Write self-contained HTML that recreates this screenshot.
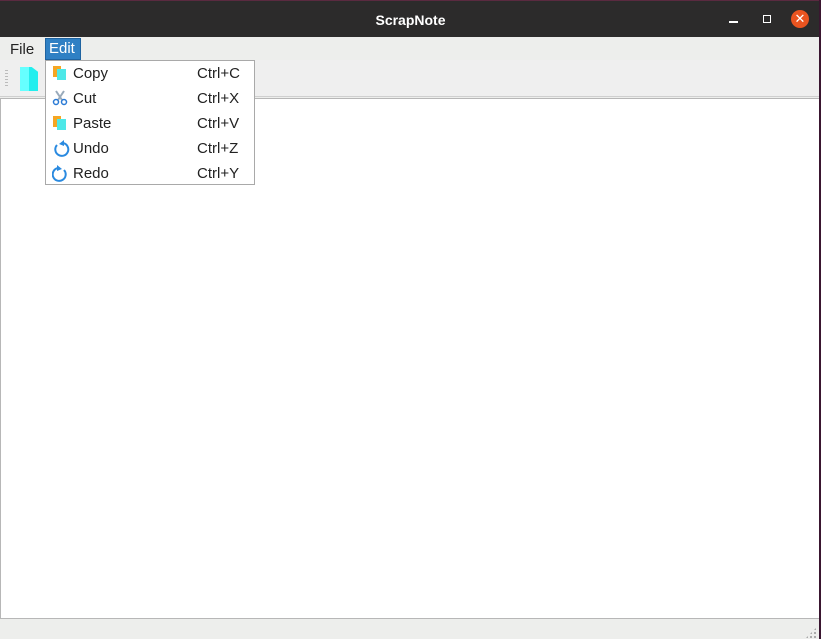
<!DOCTYPE html>
<html><head><style>
body{margin:0;width:821px;height:639px;overflow:hidden;background:#edeeec;font-family:"Liberation Sans","DejaVu Sans",sans-serif;position:relative}
.abs{position:absolute}
#tb{left:0;top:0;width:821px;height:37px;background:#2c2b2b;border-top:1px solid #5a2a40;box-sizing:border-box}
#title{left:0;width:821px;top:11px;text-align:center;color:#fff;font-weight:bold;font-size:14px}
#mb{left:0;top:37px;width:821px;height:23px;background:#edeeec;font-size:15px;color:#222}
.mi{position:absolute;top:3px;height:19px;line-height:19px;padding:0 4px}
#tool{left:0;top:60px;width:821px;height:36px;background:#efefef;border-bottom:1px solid #cfcfcf}
#text{left:0;top:98px;width:818px;height:519px;background:#fff;border:1px solid #b7b7b7}
#rb{left:819px;top:0;width:2px;height:639px;background:#3a1630}
#menu{left:45px;top:60px;width:208px;height:123px;background:#fff;border:1px solid #a9a9a9;font-size:15px;color:#222}
.it{position:absolute;left:0;width:208px;height:25px;line-height:25px}
.it .l{position:absolute;left:27px}
.it .r{position:absolute;left:151px}
.it svg{position:absolute;left:6px;top:4px}
</style></head><body>
<div id="tb" class="abs"><div id="title" class="abs">ScrapNote</div>
<div class="abs" style="left:729px;top:20px;width:9px;height:1.5px;background:#fff"></div>
<div class="abs" style="left:763px;top:14px;width:6px;height:6px;border:1.5px solid #fff"></div>
<div class="abs" style="left:791px;top:9px;width:18px;height:18px;border-radius:50%;background:#e95420;color:#fff;font-size:13px;line-height:18px;text-align:center">✕</div>
</div>
<div id="mb" class="abs"><div class="mi" style="left:6px">File</div><div class="mi" style="left:45px;background:#2f80c4;color:#fff;border:1px solid #1f63a0;top:1px;height:20px;width:28px;padding:0 3px">Edit</div></div>
<div id="tool" class="abs">
<div class="abs" style="left:5px;top:10px;width:3px;height:18px;background:repeating-linear-gradient(#bbb 0 1px,transparent 1px 3px)"></div>
<div class="abs" style="left:20px;top:7px;width:18px;height:24px;background:linear-gradient(90deg,#6ff 0 50%,#2ee 50%);clip-path:polygon(0 0,65% 0,100% 20%,100% 100%,0 100%)"></div>
</div>
<div id="text" class="abs"></div>
<div class="abs" style="left:805px;top:627px;width:12px;height:12px;background:radial-gradient(#aaa 40%,transparent 45%) 0 0/4px 4px;clip-path:polygon(100% 0,100% 100%,0 100%)"></div>
<div id="rb" class="abs"></div>
<div id="menu" class="abs">
<div class="it" style="top:0"><svg width="16" height="16"><rect x="1" y="1" width="8" height="11" fill="#f5a623"/><rect x="5" y="4" width="9" height="11" fill="#4de8e8"/></svg><span class="l">Copy</span><span class="r">Ctrl+C</span></div>
<div class="it" style="top:25px"><svg width="16" height="16"><path d="M4 1L10 10M12 1L6 10" stroke="#9ab" stroke-width="2"/><circle cx="4" cy="12" r="2.5" fill="none" stroke="#2a7ad5" stroke-width="1.5"/><circle cx="12" cy="12" r="2.5" fill="none" stroke="#2a7ad5" stroke-width="1.5"/></svg><span class="l">Cut</span><span class="r">Ctrl+X</span></div>
<div class="it" style="top:50px"><svg width="16" height="16"><rect x="1" y="1" width="8" height="11" fill="#f5a623"/><rect x="5" y="4" width="9" height="11" fill="#4de8e8"/></svg><span class="l">Paste</span><span class="r">Ctrl+V</span></div>
<div class="it" style="top:75px"><svg width="18" height="18"><path d="M5 5A6.5 6.5 0 1 0 11 3" fill="none" stroke="#2a8ae0" stroke-width="2"/><path d="M12 0L12 6L7 4Z" fill="#2a8ae0"/></svg><span class="l">Undo</span><span class="r">Ctrl+Z</span></div>
<div class="it" style="top:100px"><svg width="18" height="18"><path d="M12 5A6.5 6.5 0 1 1 6 3" fill="none" stroke="#2a8ae0" stroke-width="2"/><path d="M5 0L5 6L10 4Z" fill="#2a8ae0"/></svg><span class="l">Redo</span><span class="r">Ctrl+Y</span></div>
</div>
</body></html>
